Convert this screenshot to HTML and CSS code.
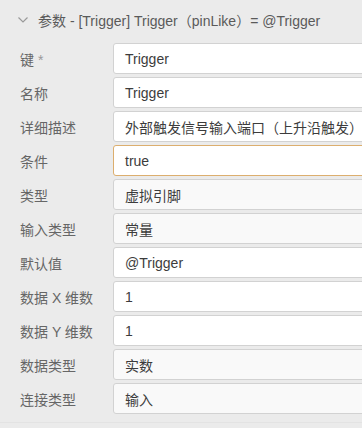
FILE: index.html
```html
<!DOCTYPE html>
<html>
<head>
<meta charset="utf-8">
<link rel="stylesheet" href="styles.css">
</head>
<body>
<div class="panel">
  <div class="header">
    <svg class="chev" width="10" height="6" viewBox="0 0 10 6"><path d="M0.5 0.5 L5 5 L9.5 0.5" fill="none" stroke="#9a9a9a" stroke-width="1.2"/></svg>
    <span class="title">参数 - [Trigger] Trigger（pinLike）= @Trigger</span>
  </div>
  <div class="rows">
    <div class="row"><div class="label">键 <span class="req">*</span></div><div class="field">Trigger</div></div>
    <div class="row"><div class="label">名称</div><div class="field">Trigger</div></div>
    <div class="row"><div class="label">详细描述</div><div class="field">外部触发信号输入端口（上升沿触发）</div></div>
    <div class="row"><div class="label">条件</div><div class="field focus">true</div></div>
    <div class="row"><div class="label">类型</div><div class="field ro">虚拟引脚</div></div>
    <div class="row"><div class="label">输入类型</div><div class="field ro">常量</div></div>
    <div class="row"><div class="label">默认值</div><div class="field">@Trigger</div></div>
    <div class="row"><div class="label">数据 X 维数</div><div class="field">1</div></div>
    <div class="row"><div class="label">数据 Y 维数</div><div class="field">1</div></div>
    <div class="row"><div class="label">数据类型</div><div class="field ro">实数</div></div>
    <div class="row"><div class="label">连接类型</div><div class="field ro">输入</div></div>
  </div>
  <div class="footer"></div>
</div>
</body>
</html>
```
FILE: styles.css
```css
html, body {
  margin: 0;
  padding: 0;
  background: #ebebeb;
  overflow: hidden;
}
.panel {
  width: 362px;
  height: 428px;
  overflow: hidden;
  font-family: "Liberation Sans", Arial, "Noto Sans CJK SC", sans-serif;
  font-size: 14px;
}
.header {
  height: 40px;
  display: flex;
  align-items: center;
  padding-left: 18px;
  color: #5a5a5a;
}
.chev {
  margin-right: 10px;
  flex: none;
}
.title {
  white-space: nowrap;
}
.rows {
  display: flex;
  flex-direction: column;
  gap: 3px;
  padding-top: 3px;
}
.row {
  display: flex;
  align-items: center;
  height: 31px;
}
.label {
  width: 93px;
  padding-left: 20px;
  flex: none;
  color: #666;
  white-space: nowrap;
}
.req {
  color: #999;
}
.field {
  flex: none;
  width: 300px;
  height: 31px;
  box-sizing: border-box;
  border: 1px solid #d2d2d2;
  border-radius: 3px;
  background: #fff;
  color: #3c3c3c;
  padding-left: 11px;
  display: flex;
  align-items: center;
  white-space: nowrap;
}
.field.ro {
  background: #f9f9f9;
}
.field.focus {
  border-color: #dcae6e;
}
.footer {
  margin-top: 8px;
  border-top: 1px solid #e3e3e3;
}
```
